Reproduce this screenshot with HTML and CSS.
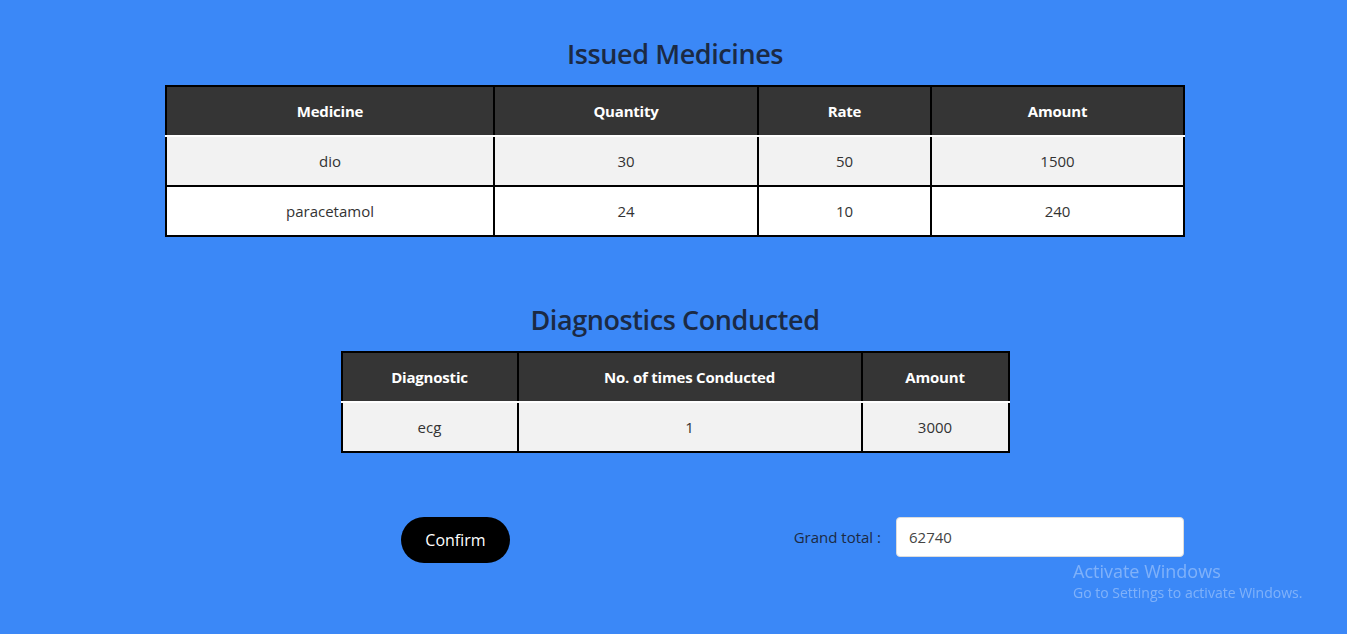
FILE: index.html
```html
<!DOCTYPE html>
<html>
<head>
<meta charset="utf-8">
<link rel="stylesheet" href="styles.css">
</head>
<body>
<main class="page">
  <section class="block block-meds">
    <h2 class="title">Issued Medicines</h2>
    <table class="grid grid-meds">
      <colgroup><col class="c-med"><col class="c-qty"><col class="c-rate"><col class="c-amt"></colgroup>
      <thead>
        <tr><th>Medicine</th><th>Quantity</th><th>Rate</th><th>Amount</th></tr>
      </thead>
      <tbody>
        <tr class="odd"><td>dio</td><td>30</td><td>50</td><td>1500</td></tr>
        <tr class="even"><td>paracetamol</td><td>24</td><td>10</td><td>240</td></tr>
      </tbody>
    </table>
  </section>

  <section class="block block-diag">
    <h2 class="title">Diagnostics Conducted</h2>
    <table class="grid grid-diag">
      <colgroup><col class="c-diag"><col class="c-times"><col class="c-damt"></colgroup>
      <thead>
        <tr><th>Diagnostic</th><th>No. of times Conducted</th><th>Amount</th></tr>
      </thead>
      <tbody>
        <tr class="odd"><td>ecg</td><td>1</td><td>3000</td></tr>
      </tbody>
    </table>
  </section>

  <div class="actions">
    <button class="confirm" type="button">Confirm</button>
    <div class="total">
      <label class="total-label" for="gt">Grand total :</label>
      <input id="gt" class="total-input" type="text" value="62740">
    </div>
  </div>
</main>
<div class="watermark">
  <div class="wm-title">Activate Windows</div>
  <div class="wm-sub">Go to Settings to activate Windows.</div>
</div>
</body>
</html>
```

FILE: styles.css
```css
html, body {
  margin: 0;
  padding: 0;
}
body {
  background: #3b88f7;
  font-family: "Open Sans", "Noto Sans", sans-serif;
  color: #333;
  min-height: 634px;
  overflow: hidden;
}
.page {
  display: flex;
  flex-direction: column;
  align-items: center;
  padding-top: 34px;
  padding-left: 3px;
}
.block {
  display: flex;
  flex-direction: column;
  align-items: center;
}
.block-diag {
  margin-top: 63px;
}
.title {
  margin: 0 0 11px;
  font-size: 27px;
  font-weight: 600;
  line-height: 40px;
  color: #1b2a44;
  letter-spacing: -0.4px;
}
.grid {
  border-collapse: collapse;
  border: 2px solid #000;
  table-layout: fixed;
}
.grid-meds { width: 1018px; }
.grid-diag { width: 667px; }
.c-med { width: 328px; }
.c-qty { width: 264px; }
.c-rate { width: 173px; }
.c-amt { width: 253px; }
.c-diag { width: 176px; }
.c-times { width: 344px; }
.c-damt { width: 147px; }

.grid th {
  background: #353535;
  color: #fff;
  font-size: 15px;
  font-weight: 700;
  height: 48px;
  padding: 0;
  letter-spacing: -0.2px;
  border-left: 2px solid #000;
  border-right: 2px solid #000;
  border-bottom: 2px solid #fff;
}
.grid td {
  font-size: 15px;
  height: 48px;
  padding: 0;
  text-align: center;
  color: #333;
  border: 2px solid #000;
}
.grid thead + tbody tr:first-child td {
  border-top: 1px solid #f2f2f2;
}
.odd td { background: #f2f2f2; }
.even td { background: #fff; }

.actions {
  margin-top: 64px;
  width: 1018px;
  display: flex;
  align-items: center;
  justify-content: space-between;
}
.confirm {
  margin-left: 235px;
  width: 109px;
  height: 46px;
  border: none;
  border-radius: 23px;
  background: #000;
  color: #fff;
  font-family: "Open Sans", "Noto Sans", sans-serif;
  font-size: 16px;
}
.total {
  display: flex;
  align-items: center;
  gap: 15px;
  align-self: flex-start;
}
.total-label {
  font-size: 15px;
  color: #1b2a44;
}
.total-input {
  box-sizing: border-box;
  width: 288px;
  height: 40px;
  border: 1px solid #dcdcdc;
  border-radius: 4px;
  padding: 0 12px;
  font-family: "Open Sans", "Noto Sans", sans-serif;
  font-size: 15px;
  color: #444;
  background: #fff;
  outline: none;
}
.watermark {
  position: fixed;
  left: 1073px;
  top: 559px;
  color: rgba(255, 255, 255, 0.35);
  font-family: "Open Sans", "Noto Sans", sans-serif;
}
.wm-title {
  font-size: 18px;
  line-height: 24px;
}
.wm-sub {
  font-size: 14px;
  line-height: 20px;
}
```
